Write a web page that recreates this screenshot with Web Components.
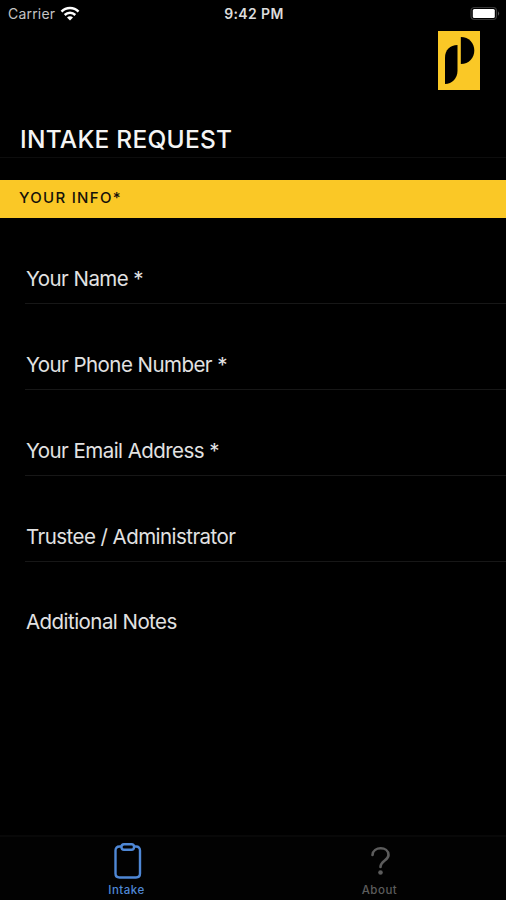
<!DOCTYPE html>
<html lang="en">
<head>
<meta charset="utf-8">
<title>Intake Request</title>
<style>
  body {
    margin: 0;
    background: #000;
    font-family: Inter, "Liberation Sans", sans-serif;
  }
</style>
</head>
<body>
<intake-app></intake-app>

<script>
class StatusBar extends HTMLElement {
  constructor() {
    super();
    this.attachShadow({ mode: 'open' });
  }

  connectedCallback() {
    this.shadowRoot.innerHTML = `
      <style>
        :host {
          display: grid;
          grid-template-columns: 1fr auto 1fr;
          align-items: center;
          height: 28px;
          padding: 0 6px 0 8px;
          box-sizing: border-box;
          color: #dcdcdc;
          font-size: 14px;
          line-height: 28px;
        }
        .carrier {
          display: flex;
          align-items: center;
          gap: 5px;
          color: #c4c4c4;
          letter-spacing: .2px;
        }
        .time {
          font-weight: 600;
          letter-spacing: .4px;
        }
        .battery {
          justify-self: end;
        }
        svg {
          display: block;
        }
      </style>
      <div class="carrier">
        <span>Carrier</span>
        <svg width="20" height="16" viewBox="0 0 20 16" fill="none" stroke="#fff" stroke-width="2.5">
          <path d="M1.5 5.6C6.2 .8 13.8 .8 18.5 5.6"/>
          <path d="M4.7 9C7.7 6.1 12.3 6.1 15.3 9"/>
          <path d="M7 11.4C8.7 9.9 11.3 9.9 13 11.4L10 14.6Z" fill="#fff" stroke="none"/>
        </svg>
      </div>
      <div class="time"><slot></slot></div>
      <svg class="battery" width="30" height="14" viewBox="0 0 30 14">
        <rect x="1" y=".5" width="25.5" height="12" rx="3.5" fill="none" stroke="#383838" stroke-width="1.2"/>
        <rect x="2.8" y="2" width="22" height="9" rx="1.5" fill="#fff"/>
        <path d="M28 4.2Q30.2 6.5 28 8.8Z" fill="#555"/>
      </svg>
    `;
  }
}

class BrandLogo extends HTMLElement {
  constructor() {
    super();
    this.attachShadow({ mode: 'open' });
  }

  connectedCallback() {
    this.shadowRoot.innerHTML = `
      <style>
        :host {
          display: block;
          width: 42px;
          height: 59px;
          background: #fac826;
        }
        svg {
          display: block;
        }
      </style>
      <svg width="42" height="59" viewBox="0 0 42 59">
        <path d="M19.5 14V40C19.5 47 14 53 7 53V26.5C7 19 12 14 19.5 14Z"/>
        <path d="M22.8 6C31 6 36.3 12 36.3 19.5S31 33 22.8 33Z"/>
      </svg>
    `;
  }
}

class PageHeader extends HTMLElement {
  constructor() {
    super();
    this.attachShadow({ mode: 'open' });
  }

  connectedCallback() {
    this.shadowRoot.innerHTML = `
      <style>
        :host {
          display: flex;
          flex-direction: column;
          height: 130px;
          padding-top: 3px;
          box-sizing: border-box;
          border-bottom: 1px solid #0d0d0d;
        }
        brand-logo {
          align-self: flex-end;
          margin-right: 26px;
        }
        h1 {
          margin: 32px 0 0 20px;
          color: #f4f4f4;
          font-size: 24.5px;
          font-weight: 500;
          line-height: 34px;
          letter-spacing: .25px;
          white-space: nowrap;
        }
      </style>
      <brand-logo></brand-logo>
      <h1><slot></slot></h1>
    `;
  }
}

class SectionTitle extends HTMLElement {
  constructor() {
    super();
    this.attachShadow({ mode: 'open' });
  }

  connectedCallback() {
    this.shadowRoot.innerHTML = `
      <style>
        :host {
          display: block;
          height: 38px;
          margin-top: 22px;
          padding-left: 19px;
          background: #fac826;
        }
        h2 {
          margin: 0;
          color: #15110a;
          font-size: 15px;
          font-weight: 500;
          line-height: 36px;
          letter-spacing: 1.3px;
        }
      </style>
      <h2><slot></slot></h2>
    `;
  }
}

class FormField extends HTMLElement {
  constructor() {
    super();
    this.attachShadow({ mode: 'open' });
  }

  connectedCallback() {
    this.shadowRoot.innerHTML = `
      <style>
        :host {
          display: flex;
          align-items: flex-end;
          height: 86px;
          margin-left: 25px;
          padding: 0 0 10px 1px;
          box-sizing: border-box;
          border-bottom: 1px solid #171717;
          color: #e2e2e2;
          font-size: 20.5px;
          line-height: 28px;
          letter-spacing: -.55px;
          white-space: nowrap;
        }
        :host([last]) {
          border-color: transparent;
          padding-bottom: 11px;
        }
      </style>
      <span><slot></slot></span>
    `;
  }
}

class TabItem extends HTMLElement {
  constructor() {
    super();
    this.attachShadow({ mode: 'open' });
  }

  connectedCallback() {
    this.shadowRoot.innerHTML = `
      <style>
        :host {
          flex: 1;
          display: flex;
          flex-direction: column;
          align-items: center;
          padding-top: 5px;
          color: #5c5c5c;
          font-size: 11.5px;
          font-weight: 500;
          line-height: 14px;
          letter-spacing: .5px;
        }
        :host([active]) {
          color: #4f88d6;
        }
        span {
          margin-top: 3px;
        }
      </style>
      <slot name="icon"></slot>
      <span><slot></slot></span>
    `;
  }
}

class IntakeApp extends HTMLElement {
  constructor() {
    super();
    this.attachShadow({ mode: 'open' });
  }

  connectedCallback() {
    this.shadowRoot.innerHTML = `
      <style>
        :host {
          display: flex;
          flex-direction: column;
          height: 900px;
          overflow: hidden;
          background: #000;
        }
        main {
          flex: 1;
        }
        nav {
          display: flex;
          height: 65px;
          box-sizing: border-box;
          border-top: 2px solid #080808;
          background: #020202;
        }
        svg {
          display: block;
        }
      </style>
      <status-bar>9:42 PM</status-bar>
      <page-header>INTAKE REQUEST</page-header>
      <main>
        <section-title>YOUR INFO*</section-title>
        <form-field>Your Name *</form-field>
        <form-field>Your Phone Number *</form-field>
        <form-field>Your Email Address *</form-field>
        <form-field>Trustee / Administrator</form-field>
        <form-field last>Additional Notes</form-field>
      </main>
      <nav>
        <tab-item active>
          <svg slot="icon" width="30" height="38" viewBox="0 0 30 38" fill="none" stroke="currentColor" stroke-width="2.4">
            <path d="M9.5 4.5H7.5Q3.5 4.5 3.5 8.5V31.5Q3.5 35.5 7.5 35.5H24Q28 35.5 28 31.5V8.5Q28 4.5 24 4.5H22"/>
            <rect x="9.5" y="2.3" width="12.5" height="5.4" rx="2.5"/>
          </svg>
          Intake
        </tab-item>
        <tab-item>
          <svg slot="icon" width="30" height="38" viewBox="0 0 30 38" fill="none" stroke="currentColor" stroke-width="2.6" stroke-linecap="round">
            <path d="M7.5 13C8 4 23.5 4 23.5 13C23.5 18.5 15.5 18.5 15.5 25"/>
            <circle cx="15.5" cy="30.5" r="2.3" fill="currentColor" stroke="none"/>
          </svg>
          About
        </tab-item>
      </nav>
    `;
  }
}

customElements.define('status-bar', StatusBar);
customElements.define('brand-logo', BrandLogo);
customElements.define('page-header', PageHeader);
customElements.define('section-title', SectionTitle);
customElements.define('form-field', FormField);
customElements.define('tab-item', TabItem);
customElements.define('intake-app', IntakeApp);
</script>
</body>
</html>
